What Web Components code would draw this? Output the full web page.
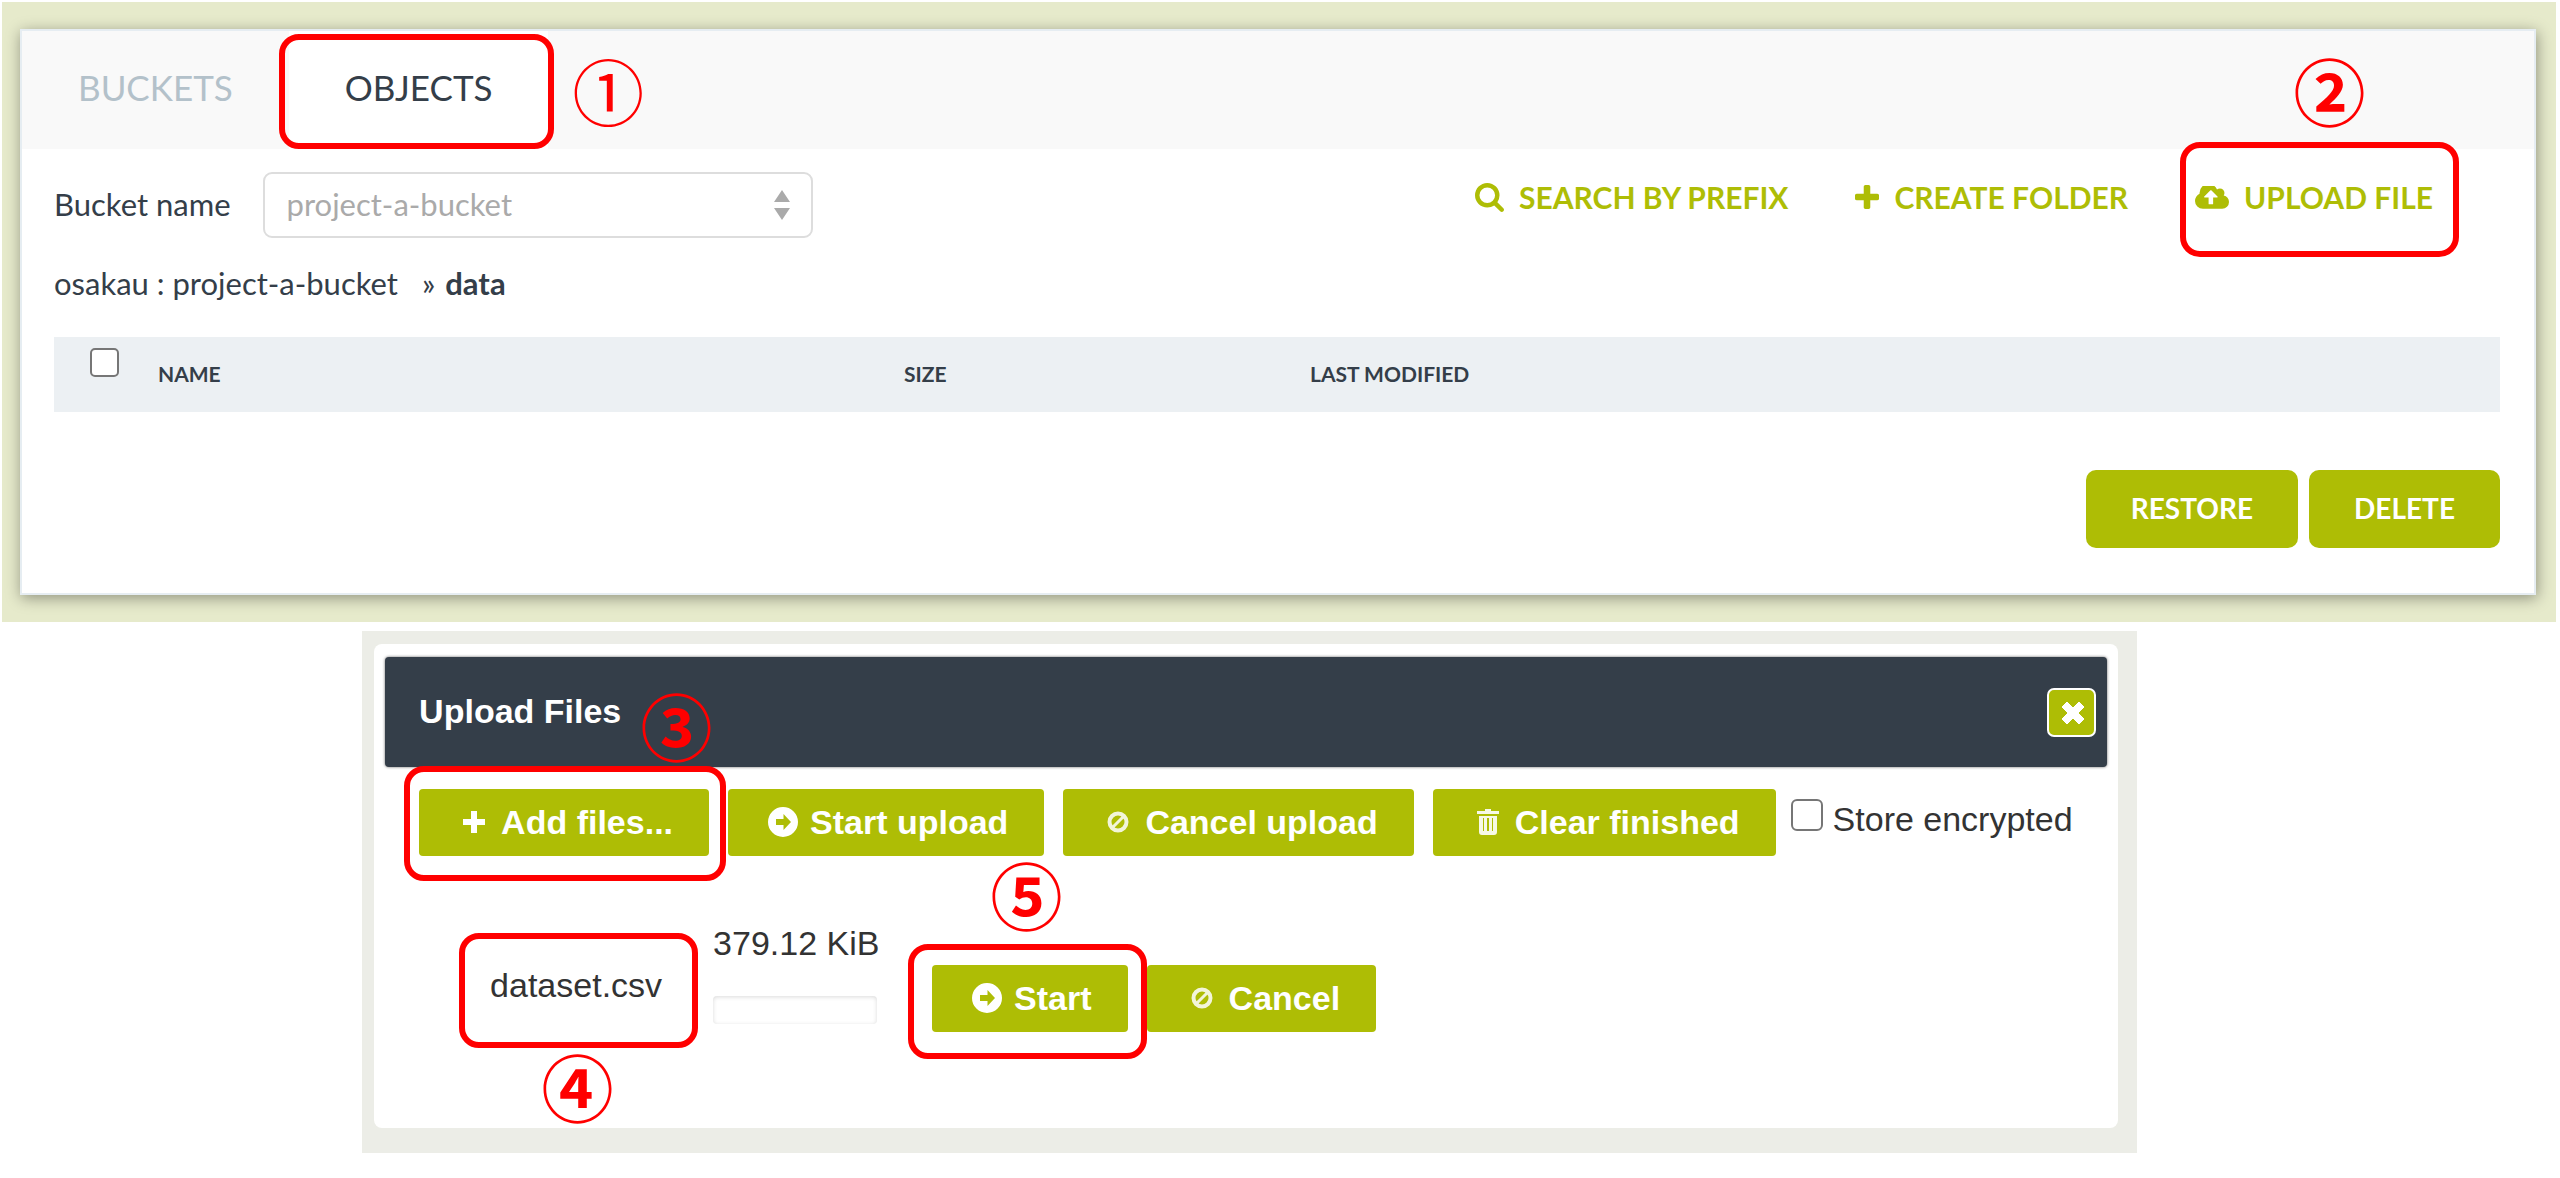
<!DOCTYPE html>
<html lang="en">
<head>
<meta charset="utf-8">
<title>Object storage</title>
<style>
  body { margin: 0; background: #fff; }
</style>
</head>
<body>
<storage-page></storage-page>
<script>
  const ICONS = {
    search: ['64 128 1664 1664', 29, 29, '<path d="M1216 832q0-185-131.5-316.5t-316.5-131.5-316.5 131.5-131.5 316.5 131.5 316.5 316.5 131.5 316.5-131.5 131.5-316.5zm512 832q0 52-38 90t-90 38q-54 0-90-38l-343-342q-179 124-399 124-143 0-273.5-55.5t-225-150-150-225-55.5-273.5 55.5-273.5 150-225 225-150 273.5-55.5 273.5 55.5 225 150 150 225 55.5 273.5q0 220-124 399l343 343q37 37 37 90z"/>'],
    plus: ['192 128 1408 1408', 24, 24, '<path d="M1600 736v192q0 40-28 68t-68 28h-416v416q0 40-28 68t-68 28h-192q-40 0-68-28t-28-68v-416h-416q-40 0-68-28t-28-68v-192q0-40 28-68t68-28h416v-416q0-40 28-68t68-28h192q40 0 68 28t28 68v416h416q40 0 68 28t28 68z"/>'],
    cloud: ['0 256 1920 1280', 34, 23, '<path d="M1280 864q0-14-9-23l-352-352q-9-9-23-9t-23 9l-351 351q-10 12-10 24 0 14 9 23t23 9h224v352q0 13 9.500 22.500t22.500 9.500h192q13 0 22.500-9.500t9.500-22.500v-352h224q13 0 22.500-9.500t9.500-22.500zm640 288q0 159-112.500 271.500t-271.500 112.500h-1088q-185 0-316.500-131.500t-131.500-316.500q0-130 70-240t188-165q-2-30-2-43 0-212 150-362t362-150q156 0 285.500 87t188.500 231q71-62 166-62 106 0 181 75t75 181q0 76-41 138 130 31 213.500 135.500t83.500 238.500z"/>'],
    add: ['0 0 24 24', 24, 24, '<path d="M9 1h6v8h8v6h-8v8H9v-8H1V9h8z"/>'],
    go: ['0 0 30 30', 30, 30, '<path fill-rule="evenodd" d="M15 0a15 15 0 1 1 0 30a15 15 0 1 1 0-30zM15.500 7v5H8v6h7.500v5l7.500-8z"/>'],
    ban: ['0 0 22 22', 22, 22, '<g fill="none" stroke="currentColor" stroke-width="4" opacity="0.85"><circle cx="11" cy="11" r="8.500"/><path d="M5.500 16.500l11-11" stroke-width="3"/></g>'],
    trash: ['0 0 24 26', 24, 26, '<path opacity="0.9" fill-rule="evenodd" d="M9 0h6v2h8v3H1V2h8zM3 7h18v16q0 3-3 3H6q-3 0-3-3zM7 9v13h1V9zM11 9v13h2V9zM16 9v13h1V9z"/>'],
    close: ['0 0 24 24', 24, 24, '<path d="M6 1l6 6 6-6 5 5-6 6 6 6-5 5-6-6-6 6-5-5 6-6-6-6z" stroke="currentColor" stroke-width="1" stroke-linejoin="round"/>'],
    sort: ['0 0 16 30', 16, 30, '<path d="M8 0l8 12H0zM8 30l8-12H0z"/>']
  };

  const define = (name, html, setup) => {
    customElements.define(name, class extends HTMLElement {
      constructor() {
        super();
        this.attachShadow({ mode: 'open' }).innerHTML =
          '<style>*{box-sizing:border-box}:host([hidden]){display:none}</style>' + html;
      }
      connectedCallback() { if (setup) setup(this, this.shadowRoot); }
    });
  };

  define('ui-icon', `
    <style>:host { display: inline-flex; flex: none; } svg { display: block; fill: currentColor; }</style>
    <span></span>`,
    (el, root) => {
      const [box, w, h, body] = ICONS[el.getAttribute('name')];
      root.querySelector('span').innerHTML =
        `<svg viewBox="${box}" width="${w}" height="${h}" aria-hidden="true">${body}</svg>`;
    });

  /* Numbered red frame around whatever is slotted in */
  define('step-callout', `
    <style>
      :host { display: inline-block; position: relative; }
      .ring { position: absolute; z-index: 2; inset: var(--ring); border: 6px solid #f00;
              border-radius: 20px; pointer-events: none; }
      .num { position: absolute; z-index: 2; left: var(--num-x); top: var(--num-y);
             width: 67px; height: 67px; display: flex; align-items: center; justify-content: center;
             font: var(--num-weight, 700) 72px/67px "Noto Sans CJK JP", sans-serif; color: #f00; pointer-events: none; }
    </style>
    <slot></slot><span class="ring"></span><span class="num"></span>`,
    (el, root) => { root.querySelector('.num').textContent = el.getAttribute('step'); });

  define('tab-item', `
    <style>
      :host { display: block; }
      button { height: 118px; padding: 0 56px 6px; border: 0; background: transparent; color: #b3c1ca;
               font: 400 35px/40px Lato, sans-serif; }
      :host([selected]) button { background: #fff; color: #343e49; }
    </style>
    <button role="tab"><slot></slot></button>`);

  define('action-link', `
    <style>
      :host { display: block; }
      a { display: flex; align-items: center; gap: 15px; height: 50px; color: #aebd05;
          text-decoration: none; font: 700 30px/36px Lato, sans-serif; white-space: nowrap; }
      .icon { display: flex; }
    </style>
    <a href="#"><span class="icon"></span><span><slot></slot></span></a>`,
    (el, root) => {
      root.querySelector('.icon').innerHTML = `<ui-icon name="${el.getAttribute('icon')}"></ui-icon>`;
    });

  define('pill-button', `
    <style>
      button { height: 78px; padding: 0 45px 2px; border: 0; border-radius: 10px; background: #aebd05;
               color: #fff; font: 700 28px/36px Lato, sans-serif; }
    </style>
    <button type="button"><slot></slot></button>`);

  define('icon-button', `
    <style>
      :host { display: block; }
      button { display: flex; align-items: center; padding: 13px 36px 14px 40px; border: 0;
               border-radius: 4px; background: #aebd05; color: #fff; white-space: nowrap;
               font: 700 34px/40px "Liberation Sans", sans-serif; }
      .icon { display: flex; justify-content: center; width: 30px; margin-right: 12px; }
    </style>
    <button type="button"><span class="icon"></span><slot></slot></button>`,
    (el, root) => {
      root.querySelector('.icon').innerHTML = `<ui-icon name="${el.getAttribute('icon')}"></ui-icon>`;
    });

  define('bucket-panel', `
    <style>
      :host { display: block; padding: 27px 20px 27px 18px; background: #e6eacb; }
      .card { border: 2px solid #e6edf2; background: #fff; color: #343e49;
              box-shadow: 1px 3px 14px rgba(0,0,0,.38); font: 400 31px/36px Lato, sans-serif; }
      header { display: flex; background: #f9f9f9; }
      main { padding: 23px 34px 45px 32px; }
      .bar { display: flex; align-items: flex-start; justify-content: space-between; }
      .field { display: flex; align-items: center; gap: 32px; }
      .field label { padding-bottom: 2px; }
      .pick { display: grid; align-items: center; width: 550px; color: #aaa; }
      .pick > * { grid-area: 1 / 1; }
      .pick ui-icon { justify-self: end; margin-right: 23px; pointer-events: none; }
      select { appearance: none; width: 100%; height: 66px; padding: 0 22px 2px; border: 2px solid #ddd;
               border-radius: 9px; background: #fff; color: #aaa; font: inherit; opacity: 1; }
      nav { display: flex; gap: 67px; padding-right: 67px; }
      .crumbs { margin: 27px 0 36px; white-space: pre; }
      .crumbs i { margin: 0 10px 0 24px; font-style: normal; }
      table { width: 100%; border-collapse: collapse; table-layout: fixed; background: #ecf0f3; }
      th { height: 75px; padding: 0 0 2px; text-align: left; font: 700 21px/24px Lato, sans-serif; }
      th:first-child { width: 104px; padding: 11px 0 0 36px; vertical-align: top; }
      th:nth-child(2) { width: 30.5%; }
      th:nth-child(3) { width: 16.6%; }
      input { display: block; appearance: none; width: 29px; height: 29px; margin: 0; border: 2px solid #767676;
              border-radius: 5px; background: #fff; }
      footer { display: flex; justify-content: flex-end; gap: 11px; margin-top: 58px; }
      .objects { --ring: 3px -6px 0 -10px; --num-x: 286px; --num-y: 24px; --num-weight: 400; }
      .upload { --ring: -30px -26px -35px -15px; --num-x: 101px; --num-y: -117px; }
    </style>
    <div class="card">
      <header role="tablist">
        <tab-item>BUCKETS</tab-item>
        <step-callout class="objects" step="①"><tab-item selected>OBJECTS</tab-item></step-callout>
      </header>
      <main>
        <div class="bar">
          <div class="field">
            <label for="bucket">Bucket name</label>
            <div class="pick">
              <select id="bucket"><option>project-a-bucket</option></select>
              <ui-icon name="sort"></ui-icon>
            </div>
          </div>
          <nav>
            <action-link icon="search">SEARCH BY PREFIX</action-link>
            <action-link icon="plus">CREATE FOLDER</action-link>
            <step-callout class="upload" step="②"><action-link icon="cloud">UPLOAD FILE</action-link></step-callout>
          </nav>
        </div>
        <div class="crumbs">osakau : project-a-bucket<i>»</i><b>data</b></div>
        <table>
          <thead><tr><th><input type="checkbox" aria-label="Select all"></th><th>NAME</th><th>SIZE</th><th>LAST MODIFIED</th></tr></thead>
        </table>
        <footer><pill-button>RESTORE</pill-button><pill-button>DELETE</pill-button></footer>
      </main>
    </div>`);

  define('upload-dialog', `
    <style>
      :host { display: block; padding: 13px 19px 25px 12px; background: #ecede7;
              font: 400 34px/40px "Liberation Sans", sans-serif; color: #333; }
      .box { padding: 13px 11px 96px; border-radius: 8px; background: #fff; }
      header { display: flex; align-items: center; justify-content: space-between; height: 110px;
               padding: 0 11px 0 34px; border-radius: 4px; background: #343e49; box-shadow: 0 0 3px rgba(0,0,0,.6); }
      h2 { margin: 0; padding-bottom: 2px; font: inherit; font-weight: 700; color: #fff; }
      .close { display: flex; align-items: center; justify-content: center; width: 49px; height: 49px; padding: 2px 0 0 2px;
               border: 2px solid #fff; border-radius: 7px; background: #aebd05; color: #fff; }
      .tools { display: flex; align-items: flex-start; gap: 19px; padding: 22px 0 0 34px; }
      .tools label { display: flex; gap: 10px; margin: 10px 0 0 -4px; white-space: nowrap; }
      input { appearance: none; width: 32px; height: 32px; margin: 0; border: 2px solid #767676;
              border-radius: 6px; background: #fff; }
      table { margin: 67px 0 0 105px; border-collapse: collapse; }
      td { padding: 42px 0 0; vertical-align: top; white-space: nowrap; }
      td.name { width: 223px; }
      td.size { width: 219px; padding: 0; }
      progress { display: block; appearance: none; width: 164px; height: 28px; margin-top: 33px; border: 0;
                 border-radius: 4px; background: #fff; box-shadow: inset 0 1px 4px rgba(0,0,0,.15); }
      progress::-webkit-progress-bar { background: transparent; }
      .row { display: flex; gap: 19px; }
      .add { --ring: -23px -17px -25px -15px; --num-x: 224px; --num-y: -99px; }
      .file { --ring: -32px -36px -43px -31px; --num-x: 54px; --num-y: 86px; }
      .start { --ring: -21px -19px -27px -24px; --num-x: 61px; --num-y: -106px; }
    </style>
    <div class="box" role="dialog" aria-labelledby="title">
      <header><h2 id="title">Upload Files</h2><button class="close" aria-label="Close"><ui-icon name="close"></ui-icon></button></header>
      <div class="tools">
        <step-callout class="add" step="③"><icon-button icon="add">Add files...</icon-button></step-callout>
        <icon-button icon="go">Start upload</icon-button>
        <icon-button icon="ban">Cancel upload</icon-button>
        <icon-button icon="trash">Clear finished</icon-button>
        <label><input type="checkbox">Store encrypted</label>
      </div>
      <table><tbody><tr>
        <td class="name"><step-callout class="file" step="④">dataset.csv</step-callout></td>
        <td class="size">379.12 KiB<progress value="0" max="100" aria-label="Upload progress"></progress></td>
        <td><div class="row">
          <step-callout class="start" step="⑤"><icon-button icon="go">Start</icon-button></step-callout>
          <icon-button icon="ban">Cancel</icon-button>
        </div></td>
      </tr></tbody></table>
    </div>`);

  define('storage-page', `
    <style>
      :host { display: block; padding: 2px 4px 27px 2px; }
      upload-dialog { margin: 9px 16.4% 0 14.1%; }
    </style>
    <bucket-panel></bucket-panel>
    <upload-dialog></upload-dialog>`);
</script>
</body>
</html>
